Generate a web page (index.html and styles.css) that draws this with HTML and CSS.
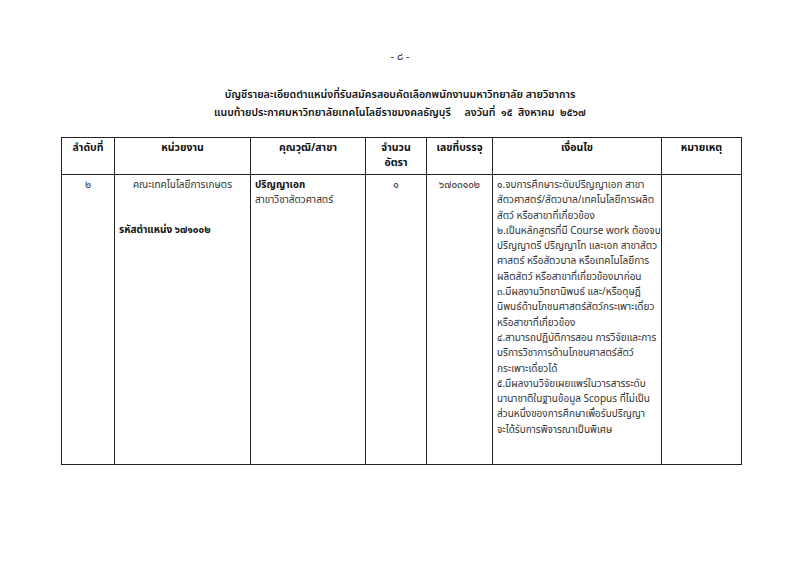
FILE: index.html
```html
<!DOCTYPE html>
<html lang="th">
<head>
<meta charset="utf-8">
<title>บัญชีรายละเอียดตำแหน่ง</title>
<link rel="stylesheet" href="styles.css">
</head>
<body>
<div class="page">
  <div class="pageno">- ๘ -</div>
  <div class="title">
    <div>บัญชีรายละเอียดตำแหน่งที่รับสมัครสอบคัดเลือกพนักงานมหาวิทยาลัย สายวิชาการ</div>
    <div>แนบท้ายประกาศมหาวิทยาลัยเทคโนโลยีราชมงคลธัญบุรี&nbsp;&nbsp;&nbsp;&nbsp; ลงวันที่&nbsp; ๑๕&nbsp; สิงหาคม&nbsp; ๒๕๖๗</div>
  </div>
  <table class="grid">
    <colgroup>
      <col class="c1"><col class="c2"><col class="c3"><col class="c4"><col class="c5"><col class="c6"><col class="c7">
    </colgroup>
    <thead>
      <tr>
        <th>ลำดับที่</th>
        <th>หน่วยงาน</th>
        <th>คุณวุฒิ/สาขา</th>
        <th>จำนวน<br>อัตรา</th>
        <th>เลขที่บรรจุ</th>
        <th>เงื่อนไข</th>
        <th>หมายเหตุ</th>
      </tr>
    </thead>
    <tbody>
      <tr>
        <td class="center">๒</td>
        <td>
          <div class="center">คณะเทคโนโลยีการเกษตร</div>
          <div class="code">รหัสตำแหน่ง ๖๗๑๐๐๒</div>
        </td>
        <td>
          <div class="bold">ปริญญาเอก</div>
          <div>สาขาวิชาสัตวศาสตร์</div>
        </td>
        <td class="center">๑</td>
        <td class="center">๖๗๐๓๑๐๒</td>
        <td class="cond">๑.จบการศึกษาระดับปริญญาเอก สาขา<br>สัตวศาสตร์/สัตวบาล/เทคโนโลยีการผลิต<br>สัตว์ หรือสาขาที่เกี่ยวข้อง<br>๒.เป็นหลักสูตรที่มี Course work ต้องจบ<br>ปริญญาตรี ปริญญาโท และเอก สาขาสัตว<br>ศาสตร์ หรือสัตวบาล หรือเทคโนโลยีการ<br>ผลิตสัตว์ หรือสาขาที่เกี่ยวข้องมาก่อน<br>๓.มีผลงานวิทยานิพนธ์ และ/หรือดุษฎี<br>นิพนธ์ด้านโภชนศาสตร์สัตว์กระเพาะเดี่ยว<br>หรือสาขาที่เกี่ยวข้อง<br>๔.สามารถปฏิบัติการสอน การวิจัยและการ<br>บริการวิชาการด้านโภชนศาสตร์สัตว์<br>กระเพาะเดี่ยวได้<br>๕.มีผลงานวิจัยเผยแพร่ในวารสารระดับ<br>นานาชาติในฐานข้อมูล Scopus ที่ไม่เป็น<br>ส่วนหนึ่งของการศึกษาเพื่อรับปริญญา<br>จะได้รับการพิจารณาเป็นพิเศษ</td>
        <td></td>
      </tr>
    </tbody>
  </table>
</div>
</body>
</html>
```

FILE: styles.css
```css
html, body {
  margin: 0;
  padding: 0;
  background: #fff;
}
body {
  font-family: "Noto Sans Thai", "Loma", "Garuda", "Tlwg Typo", "Noto Sans", "DejaVu Sans", sans-serif;
  color: #333;
  font-size: 10px;
}
.page {
  width: 800px;
  height: 566px;
  padding-top: 48px;
  box-sizing: border-box;
}
.pageno {
  text-align: center;
  font-size: 11px;
  line-height: 18px;
  color: #333;
}
.title {
  margin-top: 20px;
  text-align: center;
  font-size: 10.6px;
  line-height: 18px;
  font-weight: 600;
  color: #111;
}
.grid {
  margin-top: 15px;
  margin-left: 61px;
  width: 681px;
  border-collapse: collapse;
  table-layout: fixed;
}
.c1 { width: 53px; }
.c2 { width: 136px; }
.c3 { width: 115px; }
.c4 { width: 61px; }
.c5 { width: 66px; }
.c6 { width: 169px; }
.c7 { width: 80px; }
.grid th, .grid td {
  border: 1.5px solid #222;
  vertical-align: top;
  padding: 2px 4px;
  line-height: 15.3px;
}
.grid th {
  font-weight: 700;
  color: #111;
  height: 31px;
  font-size: 10.5px;
  padding-top: 3px;
}
.grid td {
  height: 284px;
  padding-top: 3px;
}
.center { text-align: center; }
.bold { font-weight: 700; color: #111; }
.code {
  margin-top: 30px;
  font-weight: 700;
  color: #111;
}
.cond {
  white-space: nowrap;
  font-size: 10px;
}
```
